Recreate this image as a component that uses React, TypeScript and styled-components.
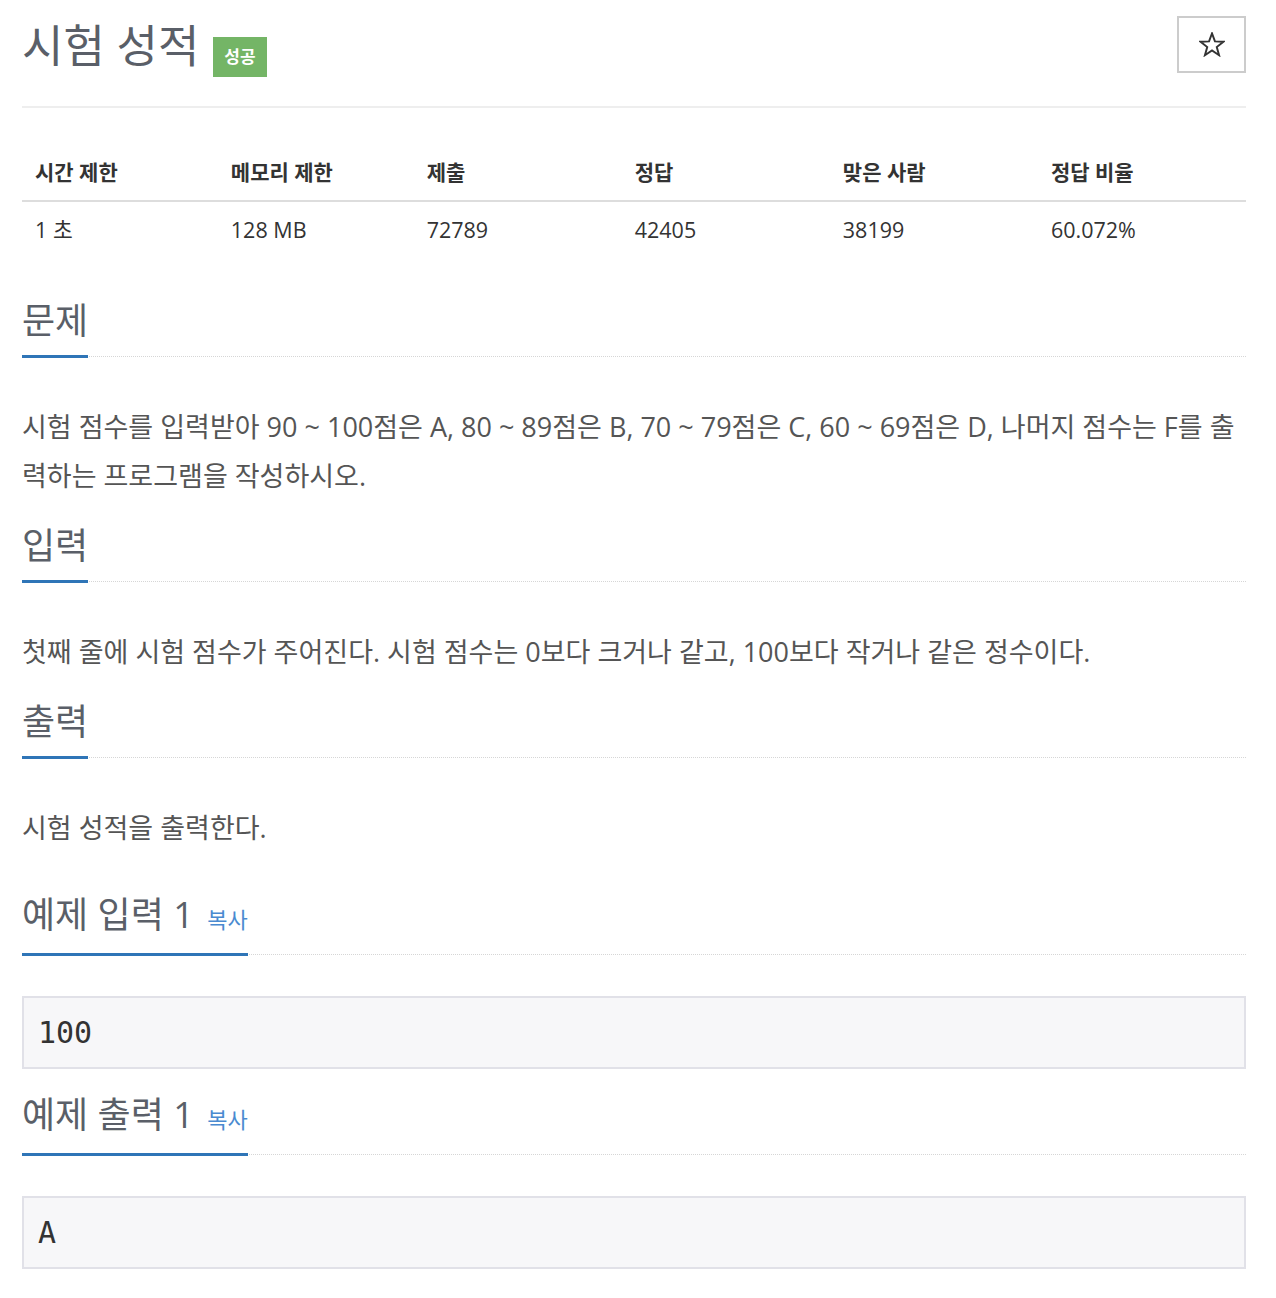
import React from "react";
import styled, { createGlobalStyle } from "styled-components";

const GlobalStyle = createGlobalStyle`
  body {
    margin: 0;
    background: #fff;
    font-family: "Open Sans", "Noto Sans CJK KR", sans-serif;
    color: #555;
  }
`;

const Page = styled.div`
  padding: 16px 30px 30px 22px;
`;

const Header = styled.div`
  display: flex;
  justify-content: space-between;
  align-items: flex-start;
  padding-bottom: 29px;
  border-bottom: 2px solid #eee;
`;

const Title = styled.h1`
  display: flex;
  align-items: flex-start;
  margin: 5px 0 0;
  font-size: 45px;
  line-height: 50px;
  font-weight: 400;
  color: #5a5f68;
`;

const Badge = styled.span`
  margin: 16px 0 0 14px;
  height: 40px;
  padding: 0 11px;
  display: inline-flex;
  align-items: center;
  background: #74b566;
  color: #fff;
  font-size: 17px;
  font-weight: 700;
`;

const StarButton = styled.button`
  width: 69px;
  height: 57px;
  display: flex;
  align-items: center;
  justify-content: center;
  padding: 0;
  background: #fff;
  border: 2px solid #ccc;
  cursor: pointer;
`;

const InfoTable = styled.table`
  width: 100%;
  margin: 36px 0 43px;
  border-collapse: collapse;
  color: #333;
  font-size: 21px;
  line-height: 30px;

  th,
  td {
    padding: 13px 13px;
    text-align: left;
  }

  th {
    font-weight: 700;
    border-bottom: 2px solid #ddd;
  }

  td {
    font-size: 21.5px;
  }
`;

const Section = styled.section<{ $gap?: number }>`
  margin-bottom: ${(p) => p.$gap ?? 26}px;
`;

const Headline = styled.div<{ $after?: number }>`
  border-bottom: 1px dotted #d6d6d6;
  margin-bottom: ${(p) => p.$after ?? 45}px;
`;

const HeadTitle = styled.h2`
  display: inline-block;
  margin: 0 0 -2px;
  padding-bottom: 14px;
  border-bottom: 3px solid #2f75b7;
  font-size: 36px;
  line-height: 40px;
  font-weight: 400;
  color: #5a5f68;
`;

const CopyLink = styled.a`
  margin-left: 4px;
  font-size: 22px;
  color: #4a8ad0;
  text-decoration: none;
  cursor: pointer;
`;

const Text = styled.p`
  margin: 0;
  font-size: 27px;
  line-height: 49px;
  color: #555;
`;

const SampleData = styled.pre`
  margin: 0;
  padding: 14px;
  border: 2px solid #e1e1e8;
  background: #f7f7f9;
  color: #333;
  font-family: "DejaVu Sans Mono", "Liberation Mono", monospace;
  font-size: 30px;
  line-height: 41px;
`;

const StarIcon = () => (
  <svg width="26" height="25" viewBox="-1 -1 27 26" fill="none">
    <polygon
      points="12.5,0.5 15.56,8.79 24.39,9.14 17.45,14.61 19.85,23.11 12.5,18.2 5.15,23.11 7.55,14.61 0.61,9.14 9.44,8.79"
      stroke="#333"
      strokeWidth="2"
      strokeLinejoin="miter"
    />
  </svg>
);

const limits = [
  { label: "시간 제한", value: "1 초", width: "16%" },
  { label: "메모리 제한", value: "128 MB", width: "16%" },
  { label: "제출", value: "72789", width: "17%" },
  { label: "정답", value: "42405", width: "17%" },
  { label: "맞은 사람", value: "38199", width: "17%" },
  { label: "정답 비율", value: "60.072%", width: "17%" },
];

const samples = [
  { title: "예제 입력 1", data: "100" },
  { title: "예제 출력 1", data: "A" },
];

const App = () => {
  return (
    <Page>
      <GlobalStyle />
      <Header>
        <Title>
          시험 성적
          <Badge>성공</Badge>
        </Title>
        <StarButton>
          <StarIcon />
        </StarButton>
      </Header>

      <InfoTable>
        <thead>
          <tr>
            {limits.map((l) => (
              <th key={l.label} style={{ width: l.width }}>
                {l.label}
              </th>
            ))}
          </tr>
        </thead>
        <tbody>
          <tr>
            {limits.map((l) => (
              <td key={l.label}>{l.value}</td>
            ))}
          </tr>
        </tbody>
      </InfoTable>

      <Section>
        <Headline>
          <HeadTitle>문제</HeadTitle>
        </Headline>
        <Text>
          시험 점수를 입력받아 90 ~ 100점은 A, 80 ~ 89점은 B, 70 ~ 79점은 C, 60 ~ 69점은 D, 나머지
          점수는 F를 출력하는 프로그램을 작성하시오.
        </Text>
      </Section>

      <Section>
        <Headline>
          <HeadTitle>입력</HeadTitle>
        </Headline>
        <Text>첫째 줄에 시험 점수가 주어진다. 시험 점수는 0보다 크거나 같고, 100보다 작거나 같은 정수이다.</Text>
      </Section>

      <Section $gap={43}>
        <Headline>
          <HeadTitle>출력</HeadTitle>
        </Headline>
        <Text>시험 성적을 출력한다.</Text>
      </Section>

      {samples.map((s) => (
        <Section key={s.title} $gap={26}>
          <Headline $after={41}>
            <HeadTitle>
              {s.title} <CopyLink>복사</CopyLink>
            </HeadTitle>
          </Headline>
          <SampleData>{s.data}</SampleData>
        </Section>
      ))}
    </Page>
  );
};

export default App;
